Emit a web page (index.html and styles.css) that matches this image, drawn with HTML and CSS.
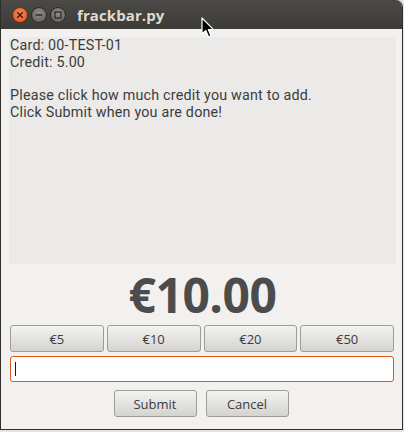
FILE: index.html
```html
<!DOCTYPE html>
<html lang="en">
<head>
  <meta charset="UTF-8">
  <title>frackbar.py</title>
  <link rel="stylesheet" href="styles.css">
</head>
<body>
  <div class="window">
    <div class="titlebar">
      <div class="controls">
        <span class="ctl close">
          <svg width="8" height="8" viewBox="0 0 8 8"><path d="M1.3 1.3 L6.7 6.7 M6.7 1.3 L1.3 6.7" stroke="#3a1a0a" stroke-width="1.4"/></svg>
        </span>
        <span class="ctl">
          <svg width="8" height="8" viewBox="0 0 8 8"><path d="M0.8 4 H7.2" stroke="#2e2d2a" stroke-width="1.4"/></svg>
        </span>
        <span class="ctl">
          <svg width="8" height="8" viewBox="0 0 8 8"><rect x="1" y="1" width="6" height="6" fill="none" stroke="#2e2d2a" stroke-width="1.3"/></svg>
        </span>
      </div>
      <span class="title">frackbar.py</span>
    </div>
    <div class="content">
      <div class="info">
        <div class="line">Card: 00-TEST-01</div>
        <div class="line">Credit: 5.00</div>
        <div class="line gap">Please click how much credit you want to add.</div>
        <div class="line">Click Submit when you are done!</div>
      </div>
      <div class="amount">€10.00</div>
      <div class="quick">
        <button class="btn">€5</button>
        <button class="btn">€10</button>
        <button class="btn">€20</button>
        <button class="btn">€50</button>
      </div>
      <div class="entry"><span class="caret"></span></div>
      <div class="actions">
        <button class="btn action">Submit</button>
        <button class="btn action">Cancel</button>
      </div>
    </div>
  </div>
  <svg class="pointer" width="14" height="22" viewBox="0 0 14 22">
    <path d="M1 1 L1 17 L4.8 13.4 L7.6 20 L10 19 L7.3 12.6 L12.5 12.6 Z" fill="#000" stroke="#fff" stroke-width="1.2" stroke-linejoin="round"/>
  </svg>
</body>
</html>
```

FILE: styles.css
```css
body {
  margin: 0;
  width: 404px;
  height: 432px;
  background-color: #e6e5e2;
  font-family: 'Open Sans', 'DejaVu Sans', sans-serif;
  position: relative;
  overflow: hidden;
}

.window {
  width: 401px;
  height: 429px;
  border: 1px solid #2f2e2b;
  border-top: none;
  border-top-right-radius: 7px;
  background-color: #f2f1f0;
  display: flex;
  flex-direction: column;
  overflow: hidden;
}

.titlebar {
  height: 29px;
  flex-shrink: 0;
  background: linear-gradient(#4b4a46, #3c3b37);
  display: flex;
  align-items: center;
  padding-left: 11px;
  box-sizing: border-box;
}

.controls {
  display: flex;
  gap: 3px;
}

.ctl {
  width: 14px;
  height: 14px;
  border-radius: 50%;
  background: radial-gradient(circle at 50% 35%, #8e8c86, #5f5d58);
  border: 1px solid #2c2b28;
  display: flex;
  align-items: center;
  justify-content: center;
}

.ctl.close {
  background: radial-gradient(circle at 50% 35%, #f58a5c, #e0511d);
  border-color: #7a2c0e;
}

.title {
  margin-left: 11px;
  font-weight: 700;
  font-size: 15px;
  letter-spacing: 0.1px;
  color: #dfdbd2;
}

.content {
  flex-grow: 1;
  padding: 8px 6px 0 8px;
  display: flex;
  flex-direction: column;
}

.info {
  height: 227px;
  background-color: #ebeae8;
  color: #3c3c3c;
  font-family: Roboto, 'Open Sans', sans-serif;
  font-size: 14.3px;
  letter-spacing: 0.2px;
  padding: 0 1px;
  box-sizing: border-box;
}

.line {
  height: 16.75px;
  line-height: 16.75px;
  white-space: nowrap;
}

.line.gap {
  margin-top: 16.75px;
}

.amount {
  height: 61px;
  display: flex;
  align-items: center;
  justify-content: center;
  font-size: 48px;
  font-weight: 700;
  color: #4c4c4c;
  letter-spacing: -0.5px;
}

.quick {
  display: grid;
  grid-template-columns: repeat(4, 1fr);
  gap: 3px;
  margin: 0 2px 0 1px;
}

.btn {
  height: 27px;
  border: 1px solid #9d9c99;
  border-radius: 3px;
  background: linear-gradient(#f3f3f2, #d4d3d0);
  font-family: 'Open Sans', 'DejaVu Sans', sans-serif;
  font-size: 13px;
  color: #3c3c3c;
  padding: 0;
}

.entry {
  height: 26px;
  margin: 4px 2px 0 1px;
  border: 1px solid #e1571f;
  border-radius: 3px;
  background-color: #ffffff;
  box-sizing: border-box;
  display: flex;
  align-items: center;
  padding-left: 4px;
}

.caret {
  width: 1px;
  height: 14px;
  background-color: #1a1a1a;
}

.actions {
  display: flex;
  justify-content: center;
  gap: 9px;
  margin-top: 8px;
  padding-right: 3px;
}

.action {
  width: 83px;
}

.pointer {
  position: absolute;
  left: 201px;
  top: 17px;
}
```
